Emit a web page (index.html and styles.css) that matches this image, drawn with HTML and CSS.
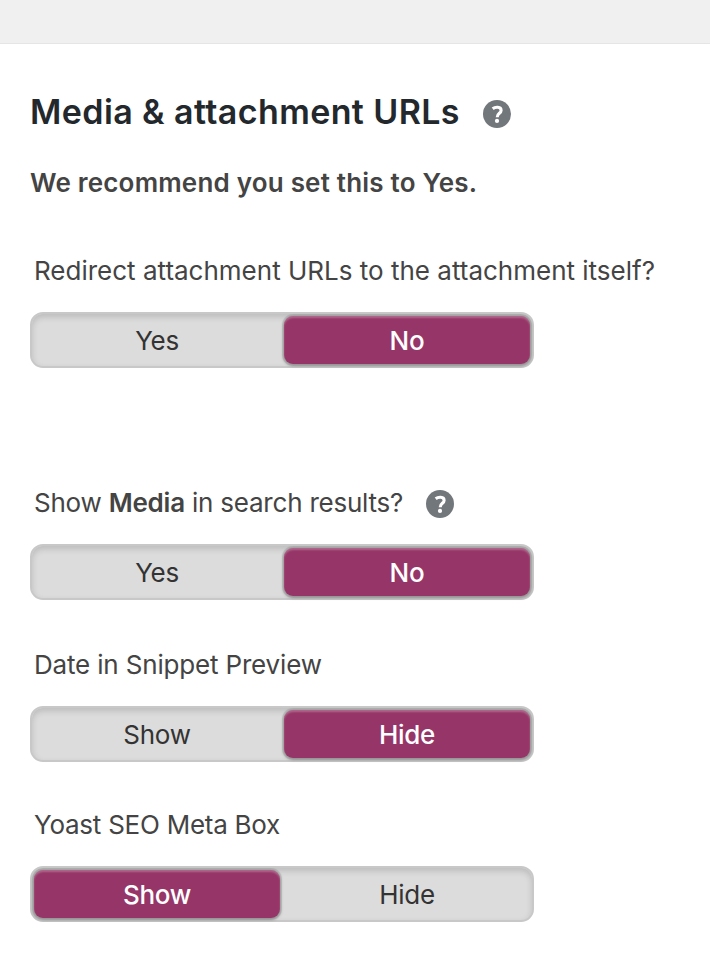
FILE: index.html
```html
<!DOCTYPE html>
<html lang="en">
<head>
    <meta charset="UTF-8">
    <meta name="viewport" content="width=device-width, initial-scale=1.0">
    <title>Media &amp; attachment URLs</title>
    <link rel="stylesheet" href="styles.css">
</head>
<body>
    <div class="topbar"></div>
    <div class="content">
        <div class="title-row">
            <h2>Media &amp; attachment URLs</h2>
            <svg class="help" viewBox="0 0 28 28">
                <circle cx="14" cy="14" r="14" fill="#72777c"/>
                <path d="M9.7 8.8C12.2 6.7 18.1 6.4 18.1 10.4C18.1 13.4 14.2 13.2 14.2 17.2" fill="none" stroke="#fff" stroke-width="3.1"/>
                <circle cx="14" cy="20.9" r="2.1" fill="#fff"/>
            </svg>
        </div>
        <p class="recommend">We recommend you set this to Yes.</p>

        <div class="field redirect">
            <div class="label"><span class="label-redirect">Redirect attachment URLs to the attachment itself?</span></div>
            <div class="switch">
                <span class="option">Yes</span>
                <span class="option selected">No</span>
            </div>
        </div>

        <div class="field search">
            <div class="label">
                <span class="label-search">Show <strong>Media</strong> in search results?</span>
                <svg class="help" viewBox="0 0 28 28">
                    <circle cx="14" cy="14" r="14" fill="#72777c"/>
                    <path d="M9.7 8.8C12.2 6.7 18.1 6.4 18.1 10.4C18.1 13.4 14.2 13.2 14.2 17.2" fill="none" stroke="#fff" stroke-width="3.1"/>
                    <circle cx="14" cy="20.9" r="2.1" fill="#fff"/>
                </svg>
            </div>
            <div class="switch">
                <span class="option">Yes</span>
                <span class="option selected">No</span>
            </div>
        </div>

        <div class="field date">
            <div class="label"><span class="label-date">Date in Snippet Preview</span></div>
            <div class="switch">
                <span class="option">Show</span>
                <span class="option selected">Hide</span>
            </div>
        </div>

        <div class="field metabox">
            <div class="label"><span class="label-metabox">Yoast SEO Meta Box</span></div>
            <div class="switch">
                <span class="option selected">Show</span>
                <span class="option">Hide</span>
            </div>
        </div>
    </div>
</body>
</html>
```
FILE: styles.css
```css
body {
    margin: 0;
    background-color: #fff;
    color: #444;
    font-family: Inter, "Liberation Sans", sans-serif;
    font-size: 26px;
    line-height: 36px;
}
.topbar {
    box-sizing: border-box;
    height: 44px;
    background-color: #f0f0f0;
    border-bottom: 1px solid #e5e5e5;
}
.content {
    padding: 48px 0 0 30px;
    white-space: nowrap;
}
.title-row {
    display: flex;
    align-items: center;
    height: 40px;
}
h2 {
    margin: 0;
    color: #23282d;
    font-size: 34px;
    font-weight: 600;
    line-height: 40px;
    letter-spacing: 0.4px;
}
.help {
    width: 28px;
    height: 28px;
    margin-left: 23px;
    margin-top: 4px;
}
.recommend {
    margin: 33px 0 0;
    font-weight: 600;
    letter-spacing: 0.2px;
}
.field {
    margin-top: 47px;
}
.redirect {
    margin-top: 52px;
}
.search {
    margin-top: 117px;
}
.metabox {
    margin-top: 45px;
}
.label {
    display: flex;
    height: 36px;
    padding-left: 4px;
    margin-bottom: 23px;
}
.label strong {
    font-weight: 600;
}
.label .help {
    margin-top: 5px;
}
.label-search {
    letter-spacing: -0.22px;
}
.label-date {
    letter-spacing: -0.17px;
}
.label-metabox {
    letter-spacing: -0.25px;
}
.switch {
    display: flex;
    box-sizing: border-box;
    width: 504px;
    height: 56px;
    padding: 2px;
    border: 2px solid #c8c8c8;
    border-radius: 13px;
    background-color: #dcdcdc;
    box-shadow: inset 0 3px 6px rgba(0,0,0,0.15);
}
.option {
    width: 246px;
    height: 48px;
    border-radius: 9px;
    color: #333;
    line-height: 49px;
    text-align: center;
    letter-spacing: -0.3px;
}
.option + .option {
    margin-left: 4px;
}
.selected {
    background-color: #963567;
    color: #fff;
    font-weight: 500;
    box-shadow: 0 1px 3px 1px rgba(0,0,0,0.28), 0 0 0 2px rgba(0,0,0,0.08), inset 0 2px 2px rgba(255,255,255,0.25);
}
```
